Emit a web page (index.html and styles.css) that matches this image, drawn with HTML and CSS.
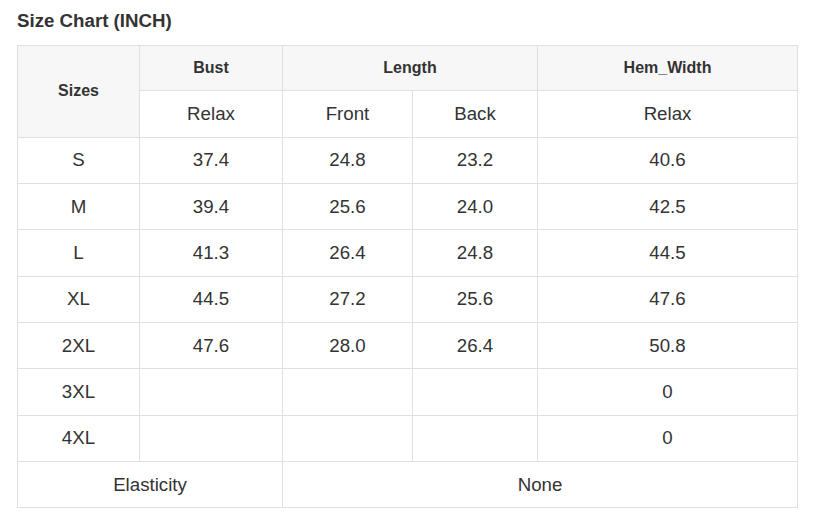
FILE: index.html
```html
<!DOCTYPE html>
<html>
<head>
<meta charset="utf-8">
<link rel="stylesheet" href="styles.css">
</head>
<body>
<div class="wrap">
  <h2 class="title">Size Chart (INCH)</h2>
  <table class="chart">
    <colgroup>
      <col class="c1"><col class="c2"><col class="c3"><col class="c4"><col class="c5">
    </colgroup>
    <thead>
      <tr class="h1">
        <th rowspan="2" class="gray">Sizes</th>
        <th class="gray">Bust</th>
        <th colspan="2" class="gray">Length</th>
        <th class="gray">Hem_Width</th>
      </tr>
      <tr>
        <td>Relax</td><td>Front</td><td>Back</td><td>Relax</td>
      </tr>
    </thead>
    <tbody>
      <tr><td>S</td><td>37.4</td><td>24.8</td><td>23.2</td><td>40.6</td></tr>
      <tr><td>M</td><td>39.4</td><td>25.6</td><td>24.0</td><td>42.5</td></tr>
      <tr><td>L</td><td>41.3</td><td>26.4</td><td>24.8</td><td>44.5</td></tr>
      <tr><td>XL</td><td>44.5</td><td>27.2</td><td>25.6</td><td>47.6</td></tr>
      <tr><td>2XL</td><td>47.6</td><td>28.0</td><td>26.4</td><td>50.8</td></tr>
      <tr><td>3XL</td><td></td><td></td><td></td><td>0</td></tr>
      <tr><td>4XL</td><td></td><td></td><td></td><td>0</td></tr>
      <tr><td colspan="2">Elasticity</td><td colspan="3">None</td></tr>
    </tbody>
  </table>
</div>
</body>
</html>
```
FILE: styles.css
```css
html, body {
  margin: 0;
  padding: 0;
  background: #fff;
}
body {
  font-family: "Liberation Sans", Arial, sans-serif;
  color: #333;
}
.wrap {
  padding: 9px 17px 0 17px;
}
.title {
  margin: 0 0 13px 0;
  font-size: 18.7px;
  line-height: 23px;
  font-weight: bold;
  color: #333;
}
.chart {
  border-collapse: collapse;
  table-layout: fixed;
  width: 780px;
}
.c1 { width: 122px; }
.c2 { width: 143px; }
.c3 { width: 130px; }
.c4 { width: 125px; }
.c5 { width: 260px; }
.chart th, .chart td {
  border: 1px solid #e0e0e0;
  text-align: center;
  padding: 0;
  height: 45.35px;
  font-size: 18.7px;
  font-weight: normal;
  color: #333;
}
.chart .h1 th {
  height: 44.2px;
}
.chart th {
  font-size: 16px;
  font-weight: bold;
}
.chart .gray {
  background: #f7f7f7;
}
```
